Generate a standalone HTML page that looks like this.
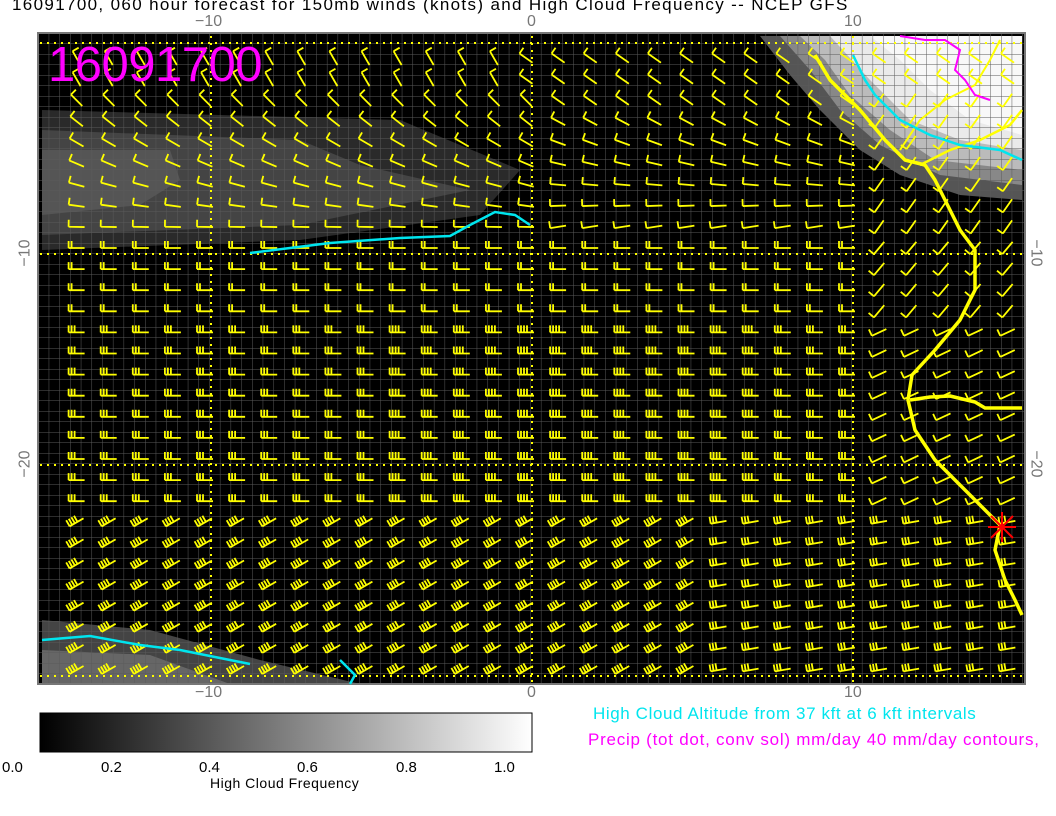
<!DOCTYPE html>
<html><head><meta charset="utf-8">
<style>
body{margin:0;background:#fff;width:1056px;height:816px;overflow:hidden;position:relative;font-family:"Liberation Sans",sans-serif;}
.t{position:absolute;white-space:nowrap;}
.a{font-size:16px;color:#777}
.c{font-size:15px;color:#000}
</style></head><body>
<div class="t" style="left:12px;top:-5px;font-size:17px;letter-spacing:1.35px;color:#000">16091700, 060 hour forecast for 150mb winds (knots) and High Cloud Frequency -- NCEP GFS</div>
<svg id="s" width="1056" height="816" style="position:absolute;left:0;top:0">
<defs>
<pattern id="g" width="10.7" height="10.5" patternUnits="userSpaceOnUse" x="38" y="33">
<path d="M0 0V10.5M0 0H10.7" stroke="#5a5a5a" stroke-width="1" fill="none"/>
</pattern>
<linearGradient id="cb" x1="0" x2="1"><stop offset="0" stop-color="#000"/><stop offset="1" stop-color="#fff"/></linearGradient>
</defs>
<rect x="38" y="33" width="987" height="651" fill="#000"/>
<path d="M42 110 L400 120 L520 170 L480 215 L300 240 L42 250Z" fill="#2a2a2a"/>
<path d="M42 130 L300 140 L360 165 L470 190 L300 225 L42 235Z" fill="#444"/>
<path d="M42 150 L170 150 L180 180 L140 205 L42 215Z" fill="#555"/>
<path d="M42 620 L150 630 L260 660 L360 684 L42 684Z" fill="#444"/>
<path d="M42 650 L150 655 L230 684 L42 684Z" fill="#666"/>
<path d="M760 36 L1022 36 L1022 200 L960 195 L900 175 L860 150 L820 110 L790 75Z" fill="#555"/>
<path d="M780 36 L1022 36 L1022 185 L940 175 L880 145 L840 110 L810 70Z" fill="#888"/>
<path d="M800 36 L1022 36 L1022 170 L935 160 L890 130 L850 95 L825 60Z" fill="#bbb"/>
<path d="M830 36 L1022 36 L1022 150 L960 140 L910 120 L870 80Z" fill="#eaeaea"/>
<path d="M870 36 L1022 36 L1022 135 L970 120 L930 90 L900 60Z" fill="#f8f8f8"/>
<rect x="38" y="33" width="987" height="651" fill="url(#g)"/>
<rect x="38" y="33" width="987" height="651" fill="none" stroke="#777" stroke-width="2"/>
<g stroke="#ffff00" stroke-width="2" stroke-dasharray="2,5" fill="none">
<path d="M211 36V684M532 36V684M853 36V684M40 43H1022M40 254H1022M40 465H1022M40 676H1022"/>
</g>
<g id="barbs" stroke="#ffff00" stroke-width="1.8" fill="none"></g>
<g stroke="#ffff00" stroke-width="3.5" fill="none" stroke-linejoin="round">
<path d="M815 55 L830 80 L860 110 L885 140 L905 160 L925 165 L935 180 L945 200 L960 230 L975 250 L975 290 L960 320 L935 350 L912 375 L908 400 L915 430 L935 460 L965 490 L985 510 L1000 525 L995 550 L1005 580 L1015 600 L1022 615"/>
<path d="M910 400 L930 397 L950 396 L975 402 L985 408 L1022 408"/>
<path d="M920 165 L950 150 L980 140 L1010 125 L1022 110" stroke-width="2.5"/>
<path d="M900 150 L920 120 L945 100 L975 85 L990 60 L1000 40" stroke-width="2"/>
</g>
<g stroke="#00e5ee" stroke-width="2.5" fill="none">
<path d="M250 253 L290 248 L330 243 L400 238 L450 236 L470 225 L495 212 L515 215 L530 225"/>
<path d="M42 640 L90 636 L140 645 L180 650 L230 660 L250 664"/>
<path d="M340 660 L355 675 L350 684"/>
<path d="M853 55 L865 80 L875 95 L900 120 L930 135 L960 145 L1000 150 L1022 160"/>
</g>
<g stroke="#ff00ff" stroke-width="2" fill="none"><path d="M900 36 L925 40 L945 40 L960 50 L955 70 L965 80 L975 95 L990 100"/></g>
<g stroke="#ff0000" stroke-width="2"><path d="M988 527H1016M1002 512V542M991 516L1013 538M991 538L1013 516"/></g>
<rect x="40" y="713" width="492" height="39" fill="url(#cb)" stroke="#000" stroke-width="1"/>
</svg>
<div class="t" style="left:48px;top:37px;font-size:49px;color:#ff00ff;letter-spacing:-0.5px">16091700</div>
<div class="t a" style="left:195px;top:13px">−10</div>
<div class="t a" style="left:527px;top:13px">0</div>
<div class="t a" style="left:844px;top:13px">10</div>
<div class="t a" style="left:195px;top:684px">−10</div>
<div class="t a" style="left:527px;top:684px">0</div>
<div class="t a" style="left:844px;top:684px">10</div>
<div class="t a" style="left:12px;top:244px;transform:rotate(-90deg)">−10</div>
<div class="t a" style="left:12px;top:455px;transform:rotate(-90deg)">−20</div>
<div class="t a" style="left:1022px;top:244px;transform:rotate(90deg)">−10</div>
<div class="t a" style="left:1022px;top:455px;transform:rotate(90deg)">−20</div>
<div class="t c" style="left:2px;top:759px">0.0</div>
<div class="t c" style="left:101px;top:759px">0.2</div>
<div class="t c" style="left:199px;top:759px">0.4</div>
<div class="t c" style="left:297px;top:759px">0.6</div>
<div class="t c" style="left:396px;top:759px">0.8</div>
<div class="t c" style="left:494px;top:759px">1.0</div>
<div class="t" style="left:210px;top:775px;font-size:14px;letter-spacing:0.5px">High Cloud Frequency</div>
<div class="t" style="left:593px;top:704px;font-size:17px;letter-spacing:0.6px;color:#00e5ee">High Cloud Altitude from 37 kft at 6 kft intervals</div>
<div class="t" style="left:588px;top:730px;font-size:17px;letter-spacing:0.75px;color:#ff00ff">Precip (tot dot, conv sol) mm/day 40 mm/day contours,</div>
<script>
var g=document.getElementById('barbs'),h='';
for(var i=-15;i<=15;i++){for(var j=-10;j<=20;j++){
 var x=532+i*32.1-14,y=254+j*21.1-6;
 if(x<44||x>1010||y<38||y>680)continue;
 var rot,n;
 if(y<100){rot=(i<0?60:35);n=1;}
 else if(y<230){rot=Math.max(0,45-(y-100)*0.35)-(i>0?10:0);n=1;if(x>850)rot=-55;}
 else if(y<330){rot=0;n=x>850?1:2;if(x>850)rot=-50;}
 else if(y<520){rot=(x>850?-25:0);n=(x>850?1:3+(i>-5&&i<8?1:0));}
 else {rot=(x<700?-30:-10);n=(x<700?4:3);}
 var p='M0 0H16';
 for(var k=0;k<n;k++){p+='M'+(k*3)+' 0V-7';}
 h+='<path transform="translate('+x.toFixed(1)+' '+y.toFixed(1)+') rotate('+rot.toFixed(0)+' 8 0)" d="'+p+'"/>';
}}
g.innerHTML=h;
</script>
</body></html>
